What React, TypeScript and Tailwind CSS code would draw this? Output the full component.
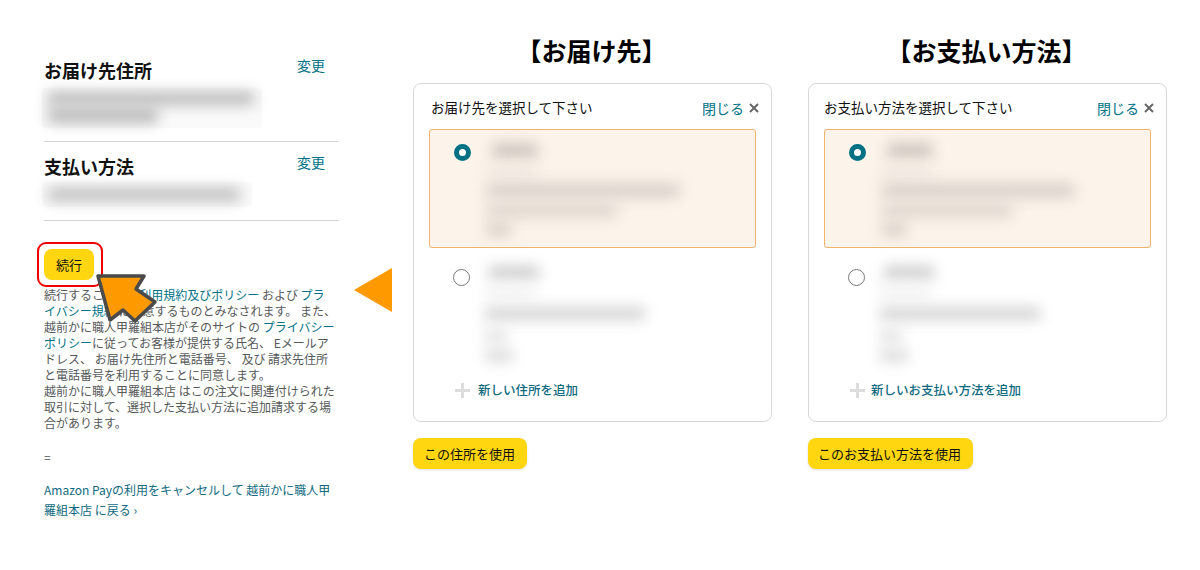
function BlurBar({ width, height = 10, tone = "bg-gray-400", offset = 0 }: { width: number; height?: number; tone?: string; offset?: number }) {
  return <div className={`${tone} blur-[7px]`} style={{ width, height, marginLeft: offset }} />;
}

function Radio({ checked = false }: { checked?: boolean }) {
  return checked ? (
    <div className="w-[17px] h-[17px] rounded-full border-[5px] border-[#007185] bg-white shrink-0" />
  ) : (
    <div className="w-[17px] h-[17px] rounded-full border border-[#777] bg-white shrink-0" />
  );
}

function Selected() {
  return (
    <div className="h-[119px] border border-[#f0b26e] bg-[#fcf3ea] rounded-[3px] flex pl-[24px] pt-[14px]">
      <Radio checked />
      <div className="ml-[16px] flex flex-col">
        <div className="h-[22px]"><BlurBar width={44} height={13} tone="bg-[#c8bfb9]" offset={6} /></div>
        <div className="h-[18px]"><BlurBar width={50} height={10} tone="bg-[#eee5de]" /></div>
        <div className="h-[20px]"><BlurBar width={192} height={13} tone="bg-[#d6cdc7]" /></div>
        <div className="h-[19px]"><BlurBar width={130} height={13} tone="bg-[#ddd4cd]" /></div>
        <div className="h-[19px]"><BlurBar width={24} height={13} tone="bg-[#d8cfc8]" /></div>
      </div>
    </div>
  );
}

function Unselected() {
  return (
    <div className="flex pl-[24px] pt-[21px]">
      <Radio />
      <div className="ml-[15px] -mt-[6px] flex flex-col">
        <div className="h-[24px] pt-[3px]"><BlurBar width={50} height={13} tone="bg-[#cccccc]" offset={4} /></div>
        <div className="h-[19px]"><BlurBar width={50} height={10} tone="bg-[#efefef]" /></div>
        <div className="h-[22px] pt-[1px]"><BlurBar width={160} height={13} tone="bg-[#d4d4d4]" /></div>
        <div className="h-[21px] pt-[1px]"><BlurBar width={22} height={13} tone="bg-[#e2e2e2]" /></div>
        <div className="h-[19px]"><BlurBar width={28} height={13} tone="bg-[#dcdcdc]" /></div>
      </div>
    </div>
  );
}

type PanelProps = {
  heading: string;
  title: string;
  titleClass: string;
  add: string;
  plusClass: string;
  button: string;
  buttonClass: string;
};

function Panel({ heading, title, titleClass, add, plusClass, button, buttonClass }: PanelProps) {
  return (
    <div className="w-[359px] flex flex-col">
      <h2 className="h-[83px] pt-[32px] pr-[2px] text-[25px] leading-[36px] font-bold text-black text-center">{heading}</h2>
      <div className="h-[339px] border border-[#d5d9d9] rounded-[8px] px-[15px]">
        <div className="h-[45px] flex justify-between">
          <span className={titleClass}>{title}</span>
          <span className="pt-[14px] text-[14px] leading-[20px] text-[#007185] flex items-start -mr-[3px]">
            閉じる
            <svg className="ml-[5px] mt-[5px]" width="10" height="10" viewBox="0 0 10 10" fill="none" stroke="#666" strokeWidth="2"><path d="M1 1l8 8M9 1l-8 8" /></svg>
          </span>
        </div>
        <Selected />
        <Unselected />
        <div className="flex items-center pl-[26px] mt-[12px] text-[12.5px] leading-[20px] font-medium text-[#0f6a80]">
          <svg className={plusClass} width="15" height="15" viewBox="0 0 15 15" fill="#dcdcdc"><path d="M6 0h3v6h6v3H9v6H6V9H0V6h6z" /></svg>
          {add}
        </div>
      </div>
      <div className="mt-[16px]">
        <button className={buttonClass}>{button}</button>
      </div>
    </div>
  );
}

export default function App() {
  return (
    <div className="relative w-[1200px] h-[570px] bg-white overflow-hidden flex font-['Noto_Sans_CJK_JP','Noto_Sans',sans-serif]">
      <div className="w-[295px] ml-[44px] shrink-0 flex flex-col">
        <div className="h-[142px] border-b border-[#d5d5d5] pt-[57px]">
          <div className="flex justify-between pr-[14px]">
            <span className="text-[18px] leading-[26px] font-bold text-[#111]">お届け先住所</span>
            <span className="text-[14px] leading-[20px] text-[#007185] -mt-[2px]">変更</span>
          </div>
          <div className="mt-[5px] -ml-[2px] w-[220px] h-[40px] bg-[#fafafa] rounded-[4px] pt-[4px] pl-[6px] flex flex-col gap-[3px]">
            <BlurBar width={206} height={13} tone="bg-[#b8b8b8]" />
            <BlurBar width={110} height={15} tone="bg-[#b8b8b8]" />
          </div>
        </div>
        <div className="h-[79px] border-b border-[#d5d5d5] pt-[11px]">
          <div className="flex justify-between pr-[14px]">
            <span className="text-[18px] leading-[26px] font-bold text-[#111]">支払い方法</span>
            <span className="text-[14px] leading-[20px] text-[#007185] -mt-[1px]">変更</span>
          </div>
          <div className="mt-[3px] -ml-[2px] w-[210px] h-[25px] bg-[#fafafa] rounded-[4px] pt-[6px] pl-[6px]">
            <BlurBar width={192} height={13} tone="bg-[#bcbcbc]" />
          </div>
        </div>
        <div className="mt-[21px] -ml-[7px] w-[66px] h-[45px] border-2 border-[#f00000] rounded-[9px] pl-[5px] pt-[5px]">
          <button className="w-[50px] h-[31px] rounded-[8px] bg-[#ffd60f] text-[13px] text-[#111]">続行</button>
        </div>
        <p className="text-[12px] leading-[16px] text-[#565959] whitespace-nowrap">
          続行することで、<span className="text-[#007185]">利用規約及びポリシー</span> および <span className="text-[#007185]">プラ<br />イバシー規約</span> に同意するものとみなされます。 また、<br />
          越前かに職人甲羅組本店がそのサイトの <span className="text-[#007185]">プライバシー<br />ポリシー</span>に従ってお客様が提供する氏名、 Eメールア<br />
          ドレス、 お届け先住所と電話番号、 及び 請求先住所<br />
          と電話番号を利用することに同意します。<br />
          越前かに職人甲羅組本店 はこの注文に関連付けられた<br />
          取引に対して、選択した支払い方法に追加請求する場<br />
          合があります。
        </p>
        <p className="mt-[10px] text-[12px] leading-[32px] text-[#565959]">=</p>
        <p className="mt-[7px] text-[12px] leading-[20px] text-[#0f6a80] whitespace-nowrap">
          Amazon Payの利用をキャンセルして 越前かに職人甲<br />羅組本店 に戻る ›
        </p>
      </div>
      <div className="w-[74px] shrink-0 pl-[15px] pt-[268px]">
        <svg width="38" height="44" viewBox="0 0 38 44"><polygon points="38,0 38,44 0,22" fill="#ff9900" /></svg>
      </div>
      <Panel
        heading="【お届け先】"
        title="お届け先を選択して下さい"
        titleClass="pl-[2px] pt-[13px] text-[13.5px] leading-[20px] text-[#111]"
        add="新しい住所を追加"
        plusClass="mr-[8px]"
        button="この住所を使用"
        buttonClass="w-[114px] h-[31px] pl-[11px] text-left rounded-[8px] bg-[#ffd60f] text-[13px] text-[#111] shadow-sm"
      />
      <div className="w-[36px] shrink-0" />
      <Panel
        heading="【お支払い方法】"
        title="お支払い方法を選択して下さい"
        titleClass="pt-[13px] text-[13.5px] leading-[20px] text-[#111]"
        add="新しいお支払い方法を追加"
        plusClass="mr-[6px]"
        button="このお支払い方法を使用"
        buttonClass="w-[165px] h-[31px] pl-[10px] text-left rounded-[8px] bg-[#ffd60f] text-[13px] text-[#111] shadow-sm"
      />
      <svg className="absolute left-[92px] top-[268px]" width="68" height="60" viewBox="0 0 68 60">
        <polygon points="6,8 52,8 44,21 63,34 43,53 31,42 18,52" fill="#ff9900" stroke="#4a4a4a" strokeWidth="3.5" strokeLinejoin="round" />
      </svg>
    </div>
  );
}
